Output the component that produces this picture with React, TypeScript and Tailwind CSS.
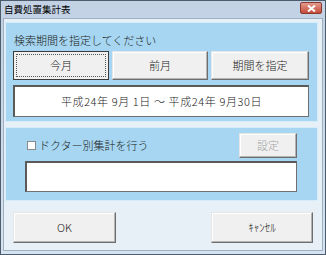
import React from "react";

const jp = { fontFamily: '"Noto Sans CJK JP", "Noto Sans", sans-serif' };

const raised =
  "bg-[#f0f0f0] border border-t-[#e6e6e6] border-l-[#e6e6e6] border-r-[#6e6e6e] border-b-[#6e6e6e] shadow-[inset_-1px_-1px_0_#b4b4b4,inset_1px_1px_0_#ffffff]";

const Btn = ({ label, w, h, disabled }: { label: string; w: string; h: string; disabled?: boolean }) => (
  <div className={`${raised} ${w} ${h} flex items-center justify-center text-[11px] font-light ${disabled ? "text-[#a3a3a3]" : "text-[#1a1a1a]"}`}>
    {label}
  </div>
);

const App = () => {
  return (
    <div
      className="w-[326px] h-[255px] bg-gradient-to-b from-[#c2d2e4] to-[#d6e3f0] border border-[#4e5d6c] flex flex-col"
      style={jp}
    >
      {/* title bar */}
      <div className="h-[17px] flex items-center justify-between pl-[3px] pr-[3px]">
        <span className="text-[9.5px] leading-none text-black">自費処置集計表</span>
        <div className="w-[22px] h-[12px] -mt-[3px] rounded-[2px] border border-[#8a3a30] bg-gradient-to-b from-[#e49a8c] to-[#c4493a] flex items-center justify-center">
          <svg width="9" height="7" viewBox="0 0 9 7">
            <path d="M1 0.5 L8 6.5 M8 0.5 L1 6.5" stroke="#ffffff" strokeWidth="2" />
          </svg>
        </div>
      </div>

      {/* client */}
      <div className="mx-[2px] mb-[3px] flex-1 bg-[#e7eff7] border border-[#9fb0c2] pt-[3px] flex flex-col">
        {/* period panel */}
        <div className="ml-[1px] w-[313px] h-[100px] bg-[#a6d6f1] border border-[#d6ecf8] pl-[7px] flex flex-col">
          <div className="pt-[10px] h-[24px] leading-[14px] text-[11px] font-light pl-[1px] text-[#1a1a1a]">検索期間を指定してください</div>
          <div className="mt-[4px] flex gap-[3px]">
            <div className="w-[96px] h-[29px] border border-[#3c3c3c] bg-[#f0f0f0] p-[2px]">
              <div className="w-full h-full border border-dotted border-[#555] flex items-center justify-center text-[11px] font-light text-[#1a1a1a]">
                今月
              </div>
            </div>
            <Btn label="前月" w="w-[96px]" h="h-[29px]" />
            <Btn label="期間を指定" w="w-[98px]" h="h-[29px]" />
          </div>
          <div className="mt-[5px] w-[296px] h-[32px] bg-white border-2 border-t-[#5a5a5a] border-l-[#5a5a5a] border-r-[#707070] border-b-[#707070] border-r border-b flex items-center justify-center text-[11px] font-light tracking-[0.6px] text-[#1a1a1a]">
            平成24年 9月 1日 ～ 平成24年 9月30日
          </div>
        </div>

        {/* doctor panel */}
        <div className="ml-[1px] mt-[5px] w-[313px] h-[74px] bg-[#a6d6f1] border border-[#d6ecf8] pl-[19px] flex flex-col">
          <div className="mt-[5px] w-[272px] h-[25px] flex items-center justify-between">
            <div className="flex items-center text-[11px] font-light text-[#1a1a1a]">
              <div className="ml-[2px] mr-[3px] w-[9px] h-[9px] bg-white border border-[#8a8a8a]" />
              ドクター別集計を行う
            </div>
            <Btn label="設定" w="w-[58px]" h="h-[25px]" disabled />
          </div>
          <div className="mt-[3px] w-[272px] h-[31px] bg-white border-2 border-t-[#5a5a5a] border-l-[#5a5a5a] border-r-[#707070] border-b-[#707070] border-r border-b" />
        </div>

        {/* bottom buttons */}
        <div className="mt-[11px] pl-[9px] pr-[9px] flex justify-between">
          <Btn label="OK" w="w-[103px]" h="h-[31px]" />
          <Btn label="ｷｬﾝｾﾙ" w="w-[102px]" h="h-[31px]" />
        </div>
      </div>
    </div>
  );
};

export default App;
